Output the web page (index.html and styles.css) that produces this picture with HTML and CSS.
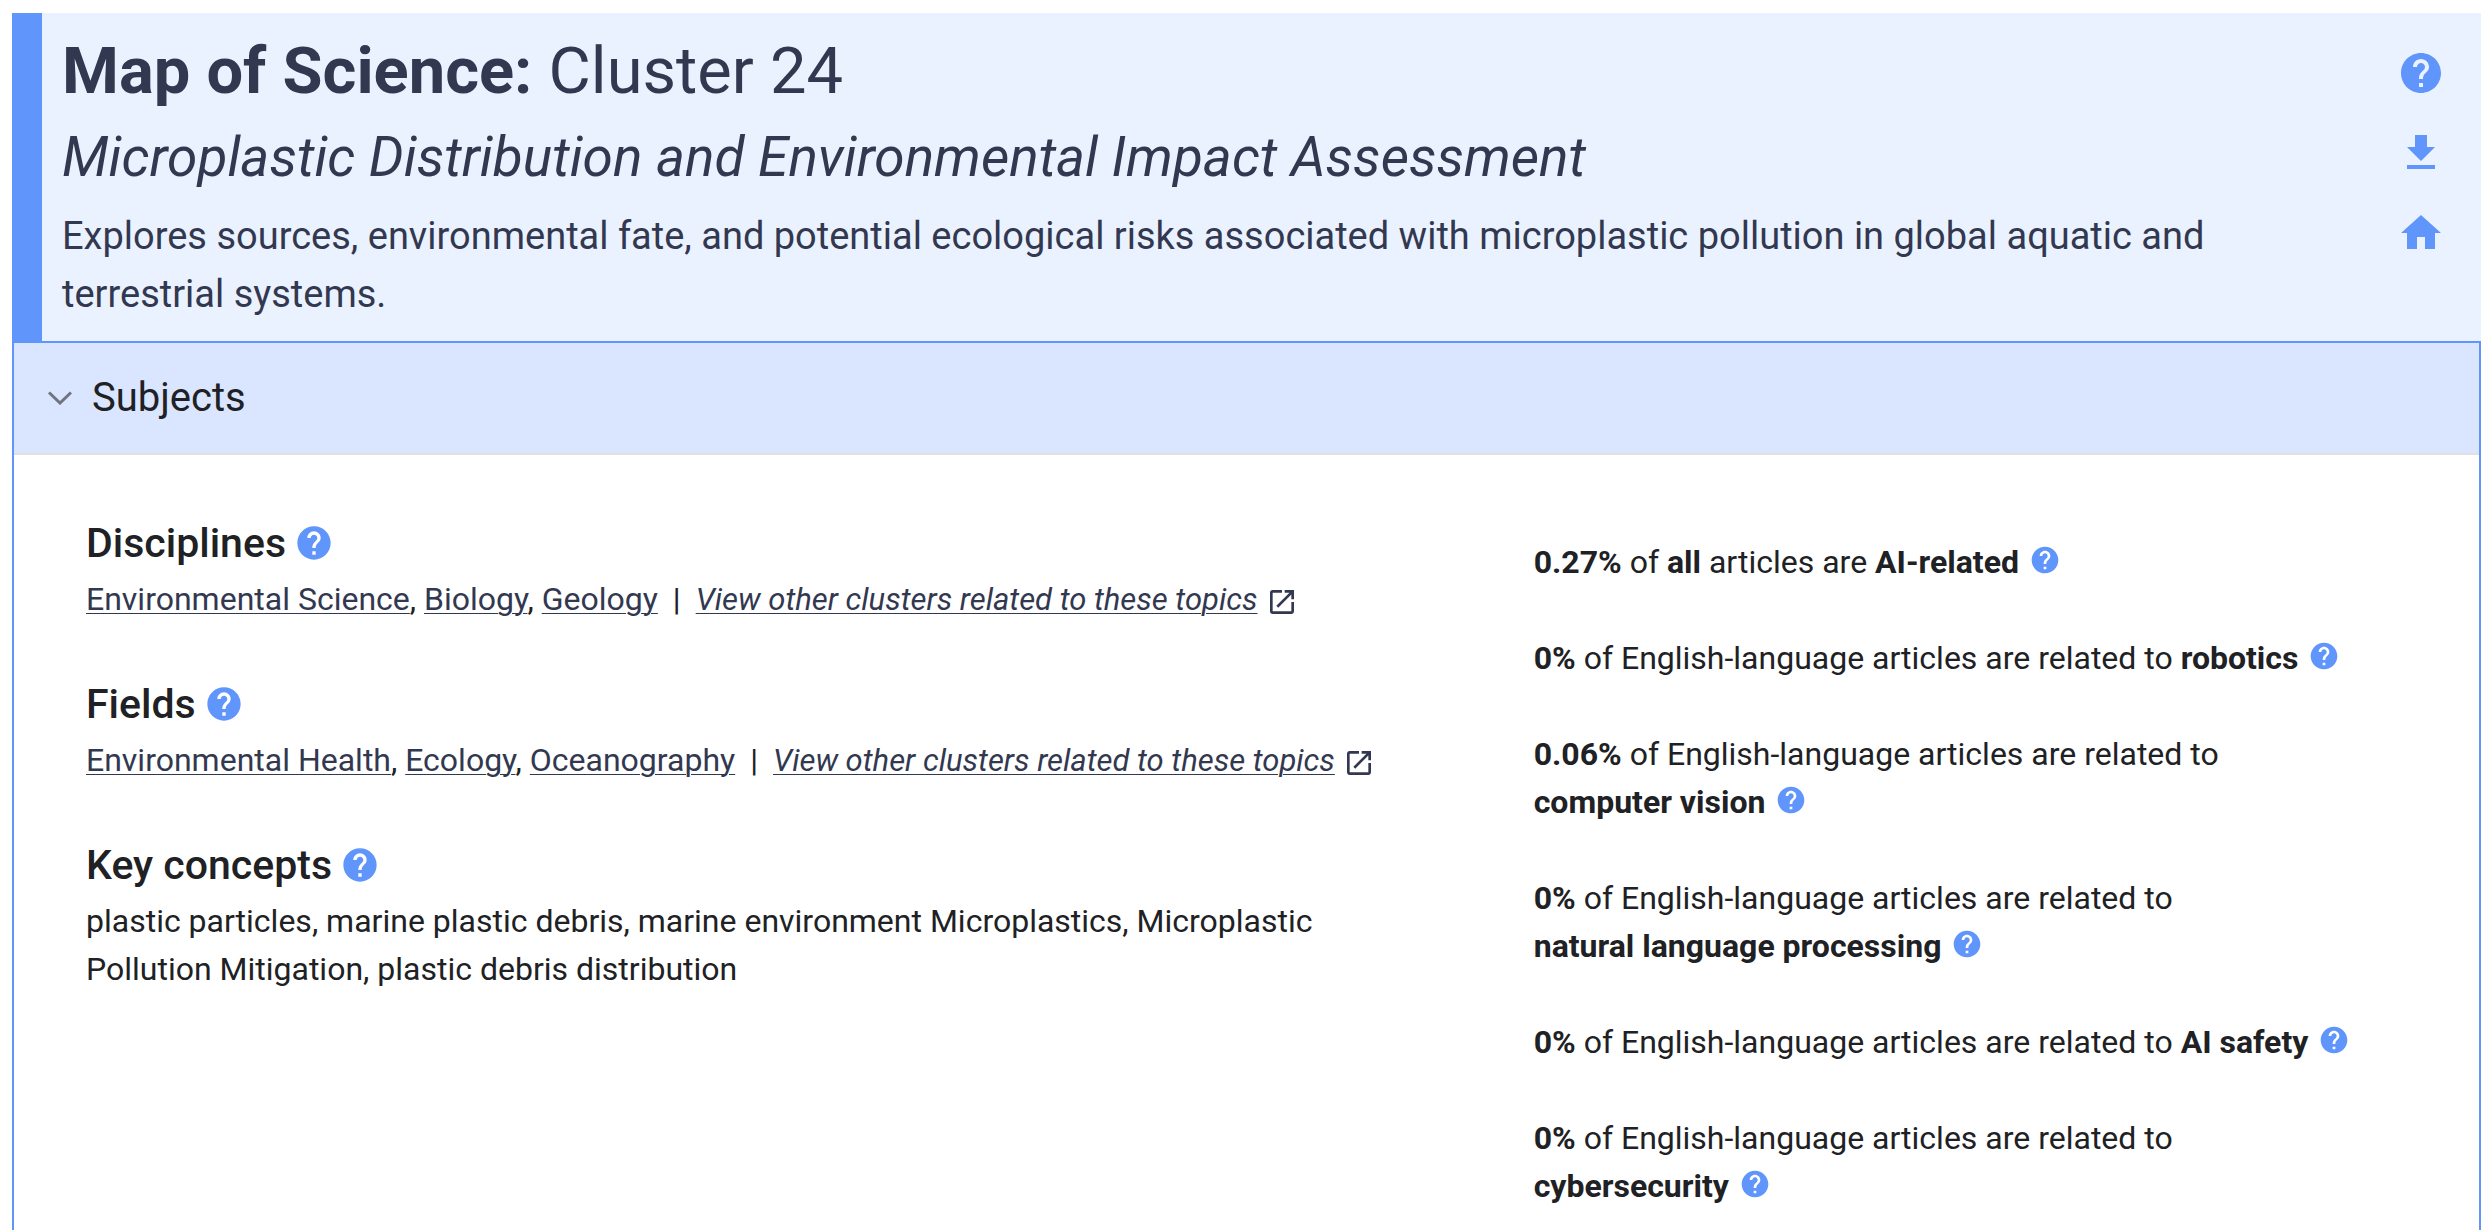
FILE: index.html
```html
<!DOCTYPE html>
<html lang="en">
<head>
    <meta charset="UTF-8">
    <meta name="viewport" content="width=device-width, initial-scale=1.0">
    <title>Map of Science: Cluster 24</title>
    <link rel="stylesheet" href="styles.css">
</head>
<body>
    <!-- shared icons -->
    <svg class="sprite" aria-hidden="true">
        <symbol id="icon-help" viewBox="0 0 24 24">
            <path d="M12 2C6.48 2 2 6.48 2 12s4.48 10 10 10 10-4.48 10-10S17.52 2 12 2zm1 17h-2v-2h2v2zm2.07-7.75l-.9.92C13.45 12.9 13 13.5 13 15h-2v-.5c0-1.1.45-2.1 1.17-2.83l1.24-1.26c.37-.36.59-.86.59-1.41 0-1.1-.9-2-2-2s-2 .9-2 2H8c0-2.21 1.79-4 4-4s4 1.79 4 4c0 .88-.36 1.68-.93 2.25z"/>
        </symbol>
        <symbol id="icon-external" viewBox="0 0 24 24">
            <path d="M19 19H5V5h7V3H5c-1.11 0-2 .9-2 2v14c0 1.1.89 2 2 2h14c1.1 0 2-.9 2-2v-7h-2v7zM14 3v2h3.59l-9.83 9.83 1.41 1.41L19 6.41V10h2V3h-7z"/>
        </symbol>
    </svg>

    <header class="header">
        <div class="header-text">
            <h1 class="title"><strong>Map of Science:</strong> Cluster 24</h1>
            <h2 class="subtitle">Microplastic Distribution and Environmental Impact Assessment</h2>
            <p class="description">Explores sources, environmental fate, and potential ecological risks associated with microplastic pollution in global aquatic and terrestrial systems.</p>
        </div>
        <div class="toolbar">
            <button class="icon-btn" aria-label="Help"><svg class="icon-large"><use href="#icon-help"/></svg></button>
            <button class="icon-btn" aria-label="Download"><svg class="icon-large" viewBox="0 0 24 24"><path d="M19 9h-4V3H9v6H5l7 7 7-7zM5 18v2h14v-2H5z"/></svg></button>
            <a class="icon-btn" href="#" aria-label="Home"><svg class="icon-large" viewBox="0 0 24 24"><path d="M10 20v-6h4v6h5v-8h3L12 3 2 12h3v8z"/></svg></a>
        </div>
    </header>

    <section class="panel">
        <button class="panel-header" aria-expanded="true">
            <svg class="chevron" viewBox="0 0 24 14"><path d="M1 1.5l11 10.5 11-10.5"/></svg>
            Subjects
        </button>

        <div class="panel-body">
            <div class="topics">
                <div class="topic">
                    <h3 class="topic-title">Disciplines <button class="icon-btn" aria-label="About disciplines"><svg class="icon-medium"><use href="#icon-help"/></svg></button></h3>
                    <p><a href="#">Environmental Science</a>, <a href="#">Biology</a>, <a href="#">Geology</a><span class="divider">|</span><a class="related" href="#">View other clusters related to these topics</a><svg class="icon-external"><use href="#icon-external"/></svg></p>
                </div>
                <div class="topic">
                    <h3 class="topic-title">Fields <button class="icon-btn" aria-label="About fields"><svg class="icon-medium"><use href="#icon-help"/></svg></button></h3>
                    <p><a href="#">Environmental Health</a>, <a href="#">Ecology</a>, <a href="#">Oceanography</a><span class="divider">|</span><a class="related" href="#">View other clusters related to these topics</a><svg class="icon-external"><use href="#icon-external"/></svg></p>
                </div>
                <div class="topic">
                    <h3 class="topic-title">Key concepts <button class="icon-btn" aria-label="About key concepts"><svg class="icon-medium"><use href="#icon-help"/></svg></button></h3>
                    <p class="concepts">plastic particles, marine plastic debris, marine environment Microplastics, Microplastic Pollution Mitigation, plastic debris distribution</p>
                </div>
            </div>

            <div class="stats">
                <p><strong>0.27%</strong> of <strong>all</strong> articles are <span class="stat-name"><strong>AI-related</strong><button class="icon-btn" aria-label="About AI-related"><svg class="icon-small"><use href="#icon-help"/></svg></button></span></p>
                <p><strong>0%</strong> of English-language articles are related to <span class="stat-name"><strong>robotics</strong><button class="icon-btn" aria-label="About robotics"><svg class="icon-small"><use href="#icon-help"/></svg></button></span></p>
                <p><strong>0.06%</strong> of English-language articles are related to <span class="stat-name"><strong>computer vision</strong><button class="icon-btn" aria-label="About computer vision"><svg class="icon-small"><use href="#icon-help"/></svg></button></span></p>
                <p><strong>0%</strong> of English-language articles are related to <span class="stat-name"><strong>natural language processing</strong><button class="icon-btn" aria-label="About natural language processing"><svg class="icon-small"><use href="#icon-help"/></svg></button></span></p>
                <p><strong>0%</strong> of English-language articles are related to <span class="stat-name"><strong>AI safety</strong><button class="icon-btn" aria-label="About AI safety"><svg class="icon-small"><use href="#icon-help"/></svg></button></span></p>
                <p><strong>0%</strong> of English-language articles are related to <span class="stat-name"><strong>cybersecurity</strong><button class="icon-btn" aria-label="About cybersecurity"><svg class="icon-small"><use href="#icon-help"/></svg></button></span></p>
            </div>
        </div>
    </section>
</body>
</html>
```

FILE: styles.css
```css
* {
    margin: 0;
    padding: 0;
    box-sizing: border-box;
}

body {
    font-family: Roboto, "Liberation Sans", sans-serif;
    font-size: 32px;
    line-height: 48px;
    color: #202124;
    background: #ffffff;
    padding: 13px 11px 0 12px;
    min-height: 100vh;
    display: flex;
    flex-direction: column;
}

a {
    color: #323850;
    text-decoration-thickness: 1px;
    text-underline-offset: 3px;
}

.sprite {
    display: none;
}

.icon-btn {
    display: inline-flex;
    background: none;
    border: none;
    color: #6096fb;
    cursor: pointer;
}

svg {
    fill: currentColor;
}

.icon-large {
    width: 48px;
    height: 48px;
}

.icon-medium {
    width: 40px;
    height: 40px;
}

.icon-small {
    width: 32px;
    height: 32px;
}

.header {
    display: flex;
    justify-content: space-between;
    gap: 120px;
    background: #ebf2ff;
    border-left: 30px solid #6096fb;
    padding: 18px 36px 18px 20px;
    color: #323850;
}

.title {
    font-size: 65px;
    font-weight: 400;
    line-height: 80px;
}

.subtitle {
    font-size: 55px;
    font-weight: 400;
    font-style: italic;
    line-height: 92px;
    margin-bottom: 4px;
}

.description {
    font-size: 38px;
    line-height: 58px;
}

.toolbar {
    display: flex;
    flex-direction: column;
    gap: 32px;
    padding-top: 18px;
}

.panel {
    flex: 1;
    border: 2px solid #6096fb;
    border-bottom: none;
}

.panel-header {
    display: flex;
    align-items: center;
    gap: 20px;
    width: 100%;
    padding: 31px 34px;
    background: #dae6ff;
    border: none;
    border-bottom: 2px solid #e0e0e0;
    font-family: inherit;
    font-size: 40px;
    line-height: 48px;
    color: #202124;
    cursor: pointer;
}

.chevron {
    width: 24px;
    height: 14px;
    fill: none;
    stroke: #6f747d;
    stroke-width: 3;
}

.panel-body {
    display: grid;
    grid-template-columns: 8fr 5fr;
    gap: 92px;
    padding: 60px 98px 48px 72px;
}

.topic {
    margin-bottom: 52px;
}

.topic-title {
    display: flex;
    align-items: center;
    gap: 8px;
    font-size: 41px;
    font-weight: 500;
    line-height: 56px;
    margin-bottom: 4px;
}

.concepts {
    max-width: 1280px;
}

.divider {
    margin: 0 15px;
}

.related {
    font-size: 31px;
    font-style: italic;
}

.icon-external {
    width: 32px;
    height: 32px;
    margin-left: 8px;
    vertical-align: -8px;
    color: #323850;
}

.stats {
    display: flex;
    flex-direction: column;
    gap: 48px;
    padding-top: 23px;
}

.stat-name {
    white-space: nowrap;
}

.stat-name .icon-btn {
    margin-left: 10px;
    vertical-align: -3px;
}
```
